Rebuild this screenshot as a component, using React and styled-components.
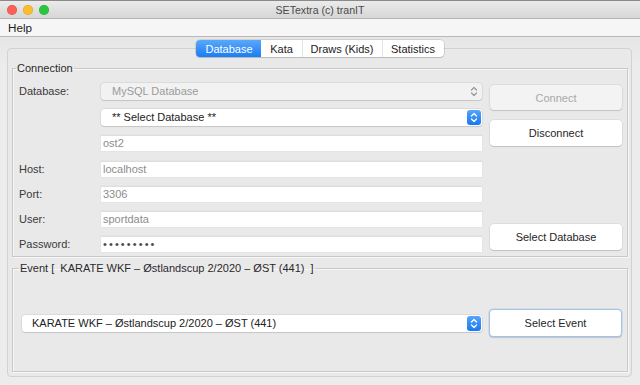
import styled, { createGlobalStyle } from "styled-components";

const GlobalStyle = createGlobalStyle`
  html, body {
    margin: 0;
    padding: 0;
    width: 640px;
    height: 385px;
    overflow: hidden;
    background: #ececec;
    font-family: "Liberation Sans", Arial, sans-serif;
    font-size: 11px;
    color: #262626;
  }
  * {
    box-sizing: border-box;
  }
`;

const Window = styled.div`
  width: 640px;
  height: 385px;
  display: flex;
  flex-direction: column;
  background: #ececec;
`;

const TitleBar = styled.div`
  height: 19px;
  display: grid;
  grid-template-columns: 1fr auto 1fr;
  align-items: center;
  background: linear-gradient(#ebebeb, #d6d6d6);
  border-top: 1px solid #8a8a8a;
  border-bottom: 1px solid #b4b4b4;
`;

const Lights = styled.div`
  display: flex;
  gap: 6px;
  padding-left: 7px;
`;

const Light = styled.span`
  width: 10px;
  height: 10px;
  border-radius: 50%;
  background: ${(p) => p.$color};
  box-shadow: inset 0 0 0 0.5px rgba(0, 0, 0, 0.15);
`;

const Title = styled.div`
  font-size: 10.6px;
  color: #4a4a4a;
`;

const MenuBar = styled.div`
  height: 18px;
  display: flex;
  align-items: center;
  padding-left: 8px;
  background: #f6f6f6;
  border-bottom: 1px solid #b9b9b9;
`;

const MenuItem = styled.span`
  font-size: 11.7px;
  color: #1e1e1e;
`;

const Body = styled.div`
  flex: 1;
  display: flex;
  flex-direction: column;
  padding: 0 8px 0 7px;
  background: linear-gradient(#e6e6e6, #ececec 30px);
`;

const TabBar = styled.div`
  position: relative;
  z-index: 1;
  align-self: center;
  display: flex;
  height: 17px;
  margin: 3px 0 -9px 1px;
  background: #ffffff;
  border-radius: 4px;
  box-shadow: 0 0 0 0.5px rgba(0, 0, 0, 0.2), 0 1px 1px rgba(0, 0, 0, 0.12);
`;

const Tab = styled.div`
  display: flex;
  align-items: center;
  justify-content: center;
  min-width: ${(p) => p.$width}px;
  padding: 0 8px;
  font-size: 11px;
  color: ${(p) => (p.$active ? "#ffffff" : "#222222")};
  background: ${(p) =>
    p.$active ? "linear-gradient(#5aa8fb, #1a7cf4)" : "transparent"};
  border-left: 1px solid ${(p) => (p.$active || p.$first ? "transparent" : "#e4e4e4")};
  border-radius: ${(p) => (p.$active ? "4px 0 0 4px" : "0")};
`;

const Panel = styled.div`
  height: 329px;
  display: flex;
  flex-direction: column;
  padding: 13px 3px 3px 4px;
  background: #e9e9e9;
  border: 1px solid #d2d2d2;
  border-radius: 4px;
`;

const Group = styled.fieldset`
  margin: ${(p) => (p.$event ? "5px 0 0" : "0")};
  padding: ${(p) => (p.$event ? "34px 5px 34px 9px" : "3px 5px 0 6px")};
  border: 1px solid #c9c9c9;
  box-shadow: 1px 1px 0 #f7f7f7, inset 1px 1px 0 #f7f7f7;
  min-width: 0;
`;

const Legend = styled.legend`
  margin-left: -3px;
  padding: 0 1px;
  line-height: 13px;
  font-size: 11px;
  color: #2a2a2a;
  white-space: pre;
`;

const GroupRow = styled.div`
  display: flex;
  align-items: ${(p) => (p.$center ? "center" : "stretch")};
`;

const Form = styled.div`
  display: flex;
  flex-direction: column;
`;

const FormRow = styled.div`
  height: ${(p) => p.$h}px;
  display: grid;
  grid-template-columns: 82px 381px;
  align-items: center;
`;

const Label = styled.label`
  grid-column: 1;
  font-size: 11px;
  color: #3a3a3a;
`;

const Field = styled.div`
  grid-column: 2;
  height: 16px;
  display: flex;
  align-items: center;
  padding-left: 2px;
  background: #ffffff;
  box-shadow: inset 0 1px 0 #dedede, 0 0 0 0.5px #e0e0e0;
  font-size: 11px;
  color: ${(p) => (p.$dots ? "#4a4a4a" : "#8d8d8d")};
  letter-spacing: ${(p) => (p.$dots ? "2.1px" : "normal")};
`;

const Combo = styled.div`
  grid-column: 2;
  width: ${(p) => (p.$width ? `${p.$width}px` : "auto")};
  height: 17px;
  display: flex;
  align-items: center;
  justify-content: space-between;
  padding: 0 1px 0 ${(p) => (p.$event ? 10 : 11)}px;
  background: ${(p) => (p.$disabled ? "#f2f2f2" : "#ffffff")};
  border-radius: 3px;
  box-shadow: 0 0 0 0.5px rgba(0, 0, 0, 0.12), 0 1px 1px rgba(0, 0, 0, 0.1);
  font-size: 11px;
  color: ${(p) => (p.$disabled ? "#9b9b9b" : "#222222")};
`;

const ArrowBox = styled.span`
  width: 14px;
  height: 15px;
  display: flex;
  align-items: center;
  justify-content: center;
  border-radius: 3px;
  background: ${(p) => (p.$blue ? "linear-gradient(#57a5fb, #1877f2)" : "transparent")};
  color: ${(p) => (p.$blue ? "#ffffff" : "#9a9a9a")};
`;

const ButtonColumn = styled.div`
  width: 132px;
  margin-left: 8px;
  display: flex;
  flex-direction: column;
  padding: 7px 0 6px;
`;

const Button = styled.div`
  height: ${(p) => p.$h || 26}px;
  width: ${(p) => p.$w || 132}px;
  margin-top: ${(p) => (p.$push ? "auto" : `${p.$mt || 0}px`)};
  margin-left: ${(p) => p.$ml || 0}px;
  display: flex;
  align-items: center;
  justify-content: center;
  background: ${(p) => (p.$disabled ? "#f3f3f3" : "#ffffff")};
  border: 1px solid ${(p) => (p.$focus ? "#9fc4f0" : "transparent")};
  border-radius: 4px;
  box-shadow: 0 0 0 0.5px rgba(0, 0, 0, 0.1), 0 1px 1px rgba(0, 0, 0, 0.12);
  font-size: 11px;
  color: ${(p) => (p.$disabled ? "#a8a8a8" : "#262626")};
`;

const Arrows = () => (
  <svg width="8" height="11" viewBox="0 0 8 11" fill="none">
    <path d="M1.5 4 L4 1.5 L6.5 4" stroke="currentColor" strokeWidth="1.3" strokeLinecap="round" strokeLinejoin="round" />
    <path d="M1.5 7 L4 9.5 L6.5 7" stroke="currentColor" strokeWidth="1.3" strokeLinecap="round" strokeLinejoin="round" />
  </svg>
);

const tabs = [
  { name: "Database", width: 63 },
  { name: "Kata", width: 41 },
  { name: "Draws (Kids)", width: 79 },
  { name: "Statistics", width: 62 },
];

const fields = [
  { label: "Host:", value: "localhost" },
  { label: "Port:", value: "3306" },
  { label: "User:", value: "sportdata" },
];

const eventName = "KARATE WKF – Østlandscup 2/2020 – ØST (441)";

export default function App() {
  return (
    <Window>
      <GlobalStyle />
      <TitleBar>
        <Lights>
          <Light $color="#fc5f57" />
          <Light $color="#fdbb2e" />
          <Light $color="#29c63f" />
        </Lights>
        <Title>SETextra (c) tranIT</Title>
        <div />
      </TitleBar>
      <MenuBar>
        <MenuItem>Help</MenuItem>
      </MenuBar>
      <Body>
        <TabBar>
          {tabs.map((t, i) => (
            <Tab key={t.name} $width={t.width} $active={i === 0} $first={i === 1}>
              {t.name}
            </Tab>
          ))}
        </TabBar>
        <Panel>
          <Group>
            <Legend>Connection</Legend>
            <GroupRow>
              <Form>
                <FormRow $h={26}>
                  <Label>Database:</Label>
                  <Combo $disabled>
                    MySQL Database
                    <ArrowBox>
                      <Arrows />
                    </ArrowBox>
                  </Combo>
                </FormRow>
                <FormRow $h={26}>
                  <Combo>
                    ** Select Database **
                    <ArrowBox $blue>
                      <Arrows />
                    </ArrowBox>
                  </Combo>
                </FormRow>
                <FormRow $h={26}>
                  <Field>ost2</Field>
                </FormRow>
                {fields.map((f) => (
                  <FormRow key={f.label} $h={25}>
                    <Label>{f.label}</Label>
                    <Field>{f.value}</Field>
                  </FormRow>
                ))}
                <FormRow $h={25}>
                  <Label>Password:</Label>
                  <Field $dots>•••••••••</Field>
                </FormRow>
              </Form>
              <ButtonColumn>
                <Button $disabled $h={25}>Connect</Button>
                <Button $mt={10}>Disconnect</Button>
                <Button $push>Select Database</Button>
              </ButtonColumn>
            </GroupRow>
          </Group>
          <Group $event>
            <Legend>{`Event [  ${eventName}  ]`}</Legend>
            <GroupRow $center>
              <Combo $event $width={460}>
                {eventName}
                <ArrowBox $blue>
                  <Arrows />
                </ArrowBox>
              </Combo>
              <Button $focus $h={28} $w={133} $ml={7}>
                Select Event
              </Button>
            </GroupRow>
          </Group>
        </Panel>
      </Body>
    </Window>
  );
}
